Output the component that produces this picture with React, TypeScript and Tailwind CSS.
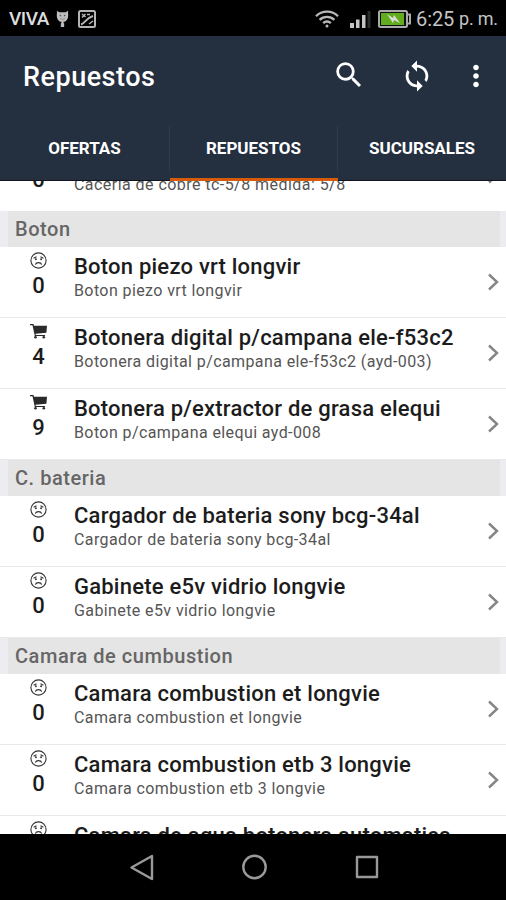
import React from 'react';
import { MdLoop, MdSearch, MdMoreVert } from 'react-icons/md';

type Item = { title: string; detail: string; stock: number };
type Section = { name: string; items: Item[] };

const sections: Section[] = [
  {
    name: 'Boton',
    items: [
      { title: 'Boton piezo vrt longvir', detail: 'Boton piezo vrt longvir', stock: 0 },
      { title: 'Botonera digital p/campana ele-f53c2', detail: 'Botonera digital p/campana ele-f53c2 (ayd-003)', stock: 4 },
      { title: 'Botonera p/extractor de grasa elequi', detail: 'Boton p/campana elequi ayd-008', stock: 9 },
    ],
  },
  {
    name: 'C. bateria',
    items: [
      { title: 'Cargador de bateria sony bcg-34al', detail: 'Cargador de bateria sony bcg-34al', stock: 0 },
      { title: 'Gabinete e5v vidrio longvie', detail: 'Gabinete e5v vidrio longvie', stock: 0 },
    ],
  },
  {
    name: 'Camara de cumbustion',
    items: [
      { title: 'Camara combustion et longvie', detail: 'Camara combustion et longvie', stock: 0 },
      { title: 'Camara combustion etb 3 longvie', detail: 'Camara combustion etb 3 longvie', stock: 0 },
    ],
  },
];

const tabs = ['OFERTAS', 'REPUESTOS', 'SUCURSALES'];

function SadFace() {
  return (
    <svg className="h-[17px] w-[17px] shrink-0" viewBox="0 0 17 17" fill="none" stroke="#333" strokeWidth="1.1">
      <circle cx="8.5" cy="8.5" r="7.6" />
      <path d="M5.3 12.6c.8-2.6 5.6-2.6 6.4 0M3.6 6.200l2.900-1.500M13.400 6.200l-2.900-1.500" />
      <circle cx="5.9" cy="7.2" r="0.4" fill="#333" />
      <circle cx="11.1" cy="7.2" r="0.4" fill="#333" />
    </svg>
  );
}

function Cart() {
  return (
    <svg className="h-[17px] w-[17px] shrink-0" viewBox="0 0 17 17" fill="#2a2a2a">
      <path d="M0 1h3.500l.5 1.800h13l-.6 7-10.900.9.3 1.200H15v1.200H4.800L2.500 2.200H0z" />
      <circle cx="5.5" cy="14.300" r="1.300" />
      <circle cx="13.800" cy="14.300" r="1.300" />
    </svg>
  );
}

function Chevron() {
  return (
    <svg className="mr-[7px] mt-[26px] h-[18px] w-3 shrink-0" viewBox="0 0 12 18" fill="none" stroke="#858585" strokeWidth="2.400">
      <path d="M2 1.500L10 9l-8 7.500" />
    </svg>
  );
}

function StatusBar() {
  return (
    <div className="flex h-9 shrink-0 items-center bg-black pl-[9px] pr-2 pt-px text-[#c4c4c4]">
      <span className="w-10 text-[19px] leading-9 font-medium tracking-[-0.5px] text-[#dedede]">VIVA</span>
      <svg className="ml-[7px] h-[18px] w-[13px]" viewBox="0 0 14 18" fill="#bdbdbd">
        <path d="M1 0l2.500 1.600h7L13 0v3c.8 4.500-1.300 8.300-4 9h-.8v1.600h.6v3.900H5.200v-3.900h.6V12H5C2.300 11.300.2 7.500 1 3z" />
        <circle cx="4.700" cy="5.200" r=".9" fill="#555" />
        <circle cx="9.300" cy="5.200" r=".9" fill="#555" />
        <path d="M4.500 8.500c1.500 1 3.500 1 5 0" fill="none" stroke="#888" />
      </svg>
      <svg className="ml-[9px] h-[18px] w-[18px]" viewBox="0 0 18 18" fill="none" stroke="#b4b4b4">
        <rect x="1" y="1" width="16" height="16" rx="1.500" strokeWidth="2" />
        <path d="M3 14.500c4-1 4-6 12-8.500" strokeWidth="2" />
        <path d="M4 4l3.500 3M7.500 4L4 7.500M9 4.500h3M11 14l4-3" strokeWidth="1.500" />
      </svg>
      <svg className="ml-auto h-[18px] w-6" viewBox="0 0 24 18" fill="none" stroke="#b8b8b8" strokeWidth="2.300">
        <path d="M1 6.200c6-6 16-6 22 0M4.600 9.800c4.200-4 10.600-4 14.800 0M8.200 13.200c2.300-2 5.300-2 7.600 0" />
        <circle cx="12" cy="16" r="1.500" fill="#b8b8b8" stroke="none" />
      </svg>
      <svg className="ml-[11px] h-[18px] w-[21px]" viewBox="0 0 21 18" fill="#c4c4c4">
        <rect x="0" y="13" width="4" height="5" />
        <rect x="6" y="9.500" width="3.500" height="8.500" />
        <rect x="12" y="5" width="3.500" height="13" />
        <rect x="17.500" y="1" width="3" height="17" fill="#2c2c2c" />
      </svg>
      <svg className="ml-[7px] h-[18px] w-[33px]" viewBox="0 0 33 18">
        <rect x="1" y="1" width="28" height="16" rx="1.500" fill="#111" stroke="#aaa" strokeWidth="2" />
        <rect x="3" y="3" width="23" height="12" fill="#62ad1e" />
        <path d="M30 4.500h2v9h-2" fill="none" stroke="#aaa" strokeWidth="2" />
        <path d="M9 4l6 4 1-3 6 8-6-3-1 3z" fill="#ddd" />
      </svg>
      <span className="ml-[5px] w-[39px] whitespace-nowrap text-[20px] leading-9 tracking-[-0.1px]">6:25</span>
      <span className="ml-1 w-[39px] whitespace-nowrap text-[18px] leading-9 tracking-[-0.2px]">p. m.</span>
    </div>
  );
}

function Row({ item }: { item: Item }) {
  return (
    <div className="flex h-[71px] border-b border-[#e9e9e9]">
      <div className="flex w-[74px] flex-col items-center pl-[3px] pt-[5px]">
        {item.stock > 0 ? <Cart /> : <SadFace />}
        <span className="mt-[5px] text-[22px] leading-6 font-medium text-[#1c1c1c]">{item.stock}</span>
      </div>
      <div className="flex-1 whitespace-nowrap pt-[7px]">
        <p className="text-[22px] leading-[26px] font-medium tracking-[0.22px] text-[#1c1c1c]">{item.title}</p>
        <p className="text-[16px] leading-[22px] tracking-[0.4px] text-[#555]">{item.detail}</p>
      </div>
      <Chevron />
    </div>
  );
}

export default function App() {
  return (
    <div className="flex h-[900px] w-[506px] flex-col overflow-hidden bg-white font-['Roboto',sans-serif]">
      <StatusBar />
      <header className="flex h-[145px] shrink-0 flex-col bg-[#242f3f] text-white">
        <div className="flex h-[82px] items-center pl-[23px] pr-[13px]">
          <h1 className="text-[27px] font-medium tracking-[0.5px]">Repuestos</h1>
          <MdSearch className="mb-1 ml-auto h-[34px] w-[34px]" />
          <MdLoop className="mb-[3px] ml-[34px] h-[34px] w-[34px]" />
          <MdMoreVert className="mb-[3px] ml-[25px] h-[34px] w-[34px]" />
        </div>
        <nav className="grid flex-1 grid-cols-[170px_168px_168px]">
          {tabs.map((tab) => (
            <div
              key={tab}
              className={
                tab === 'REPUESTOS'
                  ? 'flex flex-col border-b-[3px] border-[#d55b0b]'
                  : 'flex flex-col border-b border-[#10151d]'
              }
            >
              <button
                className={
                  tab === 'SUCURSALES'
                    ? 'mt-2 h-[46px] text-[17px] font-bold'
                    : 'mt-2 h-[46px] border-r border-[#303b4a] text-[17px] font-bold'
                }
              >
                {tab}
              </button>
            </div>
          ))}
        </nav>
      </header>
      <main className="flex flex-1 flex-col overflow-hidden">
        <div className="flex h-[30px] shrink-0 items-start overflow-hidden whitespace-nowrap">
          <span className="-mt-[13px] w-[74px] pl-[3px] text-center text-[22px] leading-6 font-medium text-[#1c1c1c]">0</span>
          <span className="-mt-[7px] flex-1 text-[16px] leading-[22px] tracking-[0.45px] text-[#555]">
            Caceria de cobre tc-5/8 medida: 5/8
          </span>
          <div className="-mt-[41px]">
            <Chevron />
          </div>
        </div>
        {sections.map((section) => (
          <section key={section.name} className="shrink-0">
            <h2 className="h-9 border-l-8 border-r-[6px] border-[#ededf1] bg-[#e5e5e5] pl-[7px] text-[20px] leading-9 font-medium tracking-[0.54px] text-[#666]">
              {section.name}
            </h2>
            {section.items.map((item) => (
              <Row key={item.title} item={item} />
            ))}
          </section>
        ))}
        <div className="flex h-[71px] shrink-0">
          <div className="flex w-[74px] justify-center pl-[3px] pt-[5px]">
            <SadFace />
          </div>
          <p className="whitespace-nowrap pt-[7px] text-[22px] leading-[26px] font-medium tracking-[0.22px] text-[#1c1c1c]">
            Camara de agua botonera automatica
          </p>
        </div>
      </main>
      <footer className="flex h-[66px] shrink-0 items-center bg-black pl-[130px]">
        <svg className="h-[27px] w-6" viewBox="0 0 24 27" fill="none" stroke="#999" strokeWidth="2.400" strokeLinejoin="round">
          <path d="M22 2v23L1.500 13.500z" />
        </svg>
        <svg className="ml-[88px] h-[26px] w-[26px]" viewBox="0 0 26 26" fill="none" stroke="#999" strokeWidth="2.400">
          <circle cx="12.500" cy="13" r="11.200" />
        </svg>
        <svg className="ml-[87px] h-6 w-6" viewBox="0 0 24 24" fill="none" stroke="#999" strokeWidth="2.400" strokeLinejoin="round">
          <rect x="2" y="2" width="20" height="20" />
        </svg>
      </footer>
    </div>
  );
}
